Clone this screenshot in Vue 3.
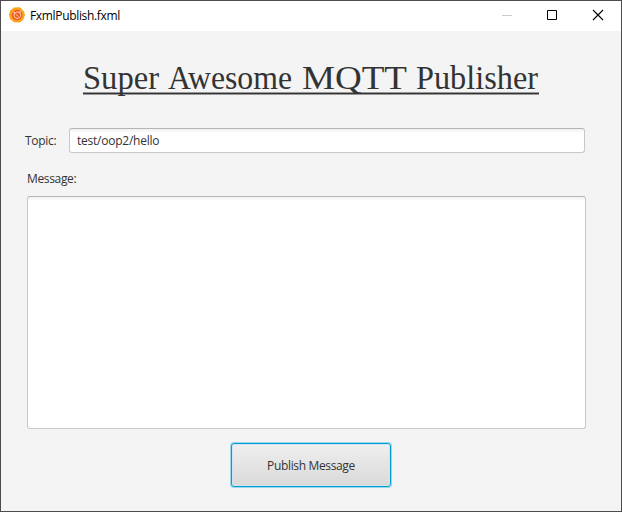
<script setup>
import { ref } from 'vue'

const topic = ref('test/oop2/hello')
const message = ref('')
const heading = [
  { text: 'Super', x: 0, width: 76 },
  { text: 'Awesome', x: 85, width: 124 },
  { text: 'MQTT', x: 219, width: 105 },
  { text: 'Publisher', x: 333, width: 122 },
]
</script>

<template>
  <main class="window">
    <header class="titlebar">
      <svg class="logo" width="16" height="16" viewBox="0 0 16 16">
        <path d="M5 .5 11 .3 15 4.500 16 8 14.200 13 10.500 15.600 5 15.300 1 12 0 8 1.200 3.400Z" fill="#f9a51c" />
        <circle cx="8" cy="8" r="5.300" fill="#f4581f" />
        <path d="M3.800 4.800 6.300 5.800C8 4.600 10 5 11 6.200c.9 1.300.7 3.300-.4 4.300-1.300 1.200-3.600 1.100-4.800-.1-1-1.100-1.100-3-.1-4.200M10 5.400l2-.7" fill="none" stroke="#ffe0c4" stroke-width="1" />
        <path d="m6.500 7 3 2.500" stroke="#ffd9b8" stroke-width=".9" />
      </svg>
      <span class="caption">FxmlPublish.fxml</span>
      <div class="controls">
        <svg width="46" height="29" viewBox="0 0 46 29"><path d="M18 14.500h10" stroke="#ccc" /></svg>
        <svg width="46" height="29" viewBox="0 0 46 29"><path d="M17.500 9.500h9v9h-9z" fill="none" stroke="#000" /></svg>
        <svg width="46" height="29" viewBox="0 0 46 29"><path d="m17 9 10 10M27 9 17 19" stroke="#000" stroke-width="1.100" /></svg>
      </div>
    </header>

    <h1 class="heading">
      <svg width="456" height="46" viewBox="0 0 456 46">
        <path d="M0 38.500h456" stroke="#999" stroke-width="3" />
        <path d="M0 38.500h456" stroke="#333" stroke-width="1" />
        <text
          v-for="word in heading"
          :key="word.text"
          :x="word.x"
          y="34"
          :textLength="word.width"
          lengthAdjust="spacingAndGlyphs"
        >{{ word.text }}</text>
      </svg>
    </h1>

    <div class="topic">
      <label for="topic">Topic:</label>
      <input id="topic" v-model="topic" class="field" type="text" />
    </div>
    <label class="message-label" for="message">Message:</label>
    <textarea id="message" v-model="message" class="field area"></textarea>
    <button class="publish"><span>Publish Message</span></button>
  </main>
</template>

<style>
body { margin: 0; }
</style>

<style scoped>
.window {
  box-sizing: border-box;
  width: 622px;
  height: 512px;
  display: flex;
  flex-direction: column;
  overflow: hidden;
  border: 1px solid #4d4b50;
  background: #f4f4f4;
  color: #333;
  font: 12px/16px "Open Sans", "Noto Sans", sans-serif;
}
.titlebar {
  height: 30px;
  flex: none;
  display: flex;
  align-items: flex-start;
  background: #fff;
  color: #000;
}
.logo { margin: 6px 0 0 8px; }
.caption { margin: 7px 0 0 5px; letter-spacing: -0.33px; }
.controls { display: flex; margin-left: auto; margin-right: -1px; }
.heading { margin: 24px 0 0 82px; height: 44px; font-weight: 400; }
.heading svg { display: block; overflow: visible; }
.heading text { font: 34px "Liberation Serif", serif; fill: #333; }
.topic {
  display: flex;
  align-items: center;
  height: 25px;
  margin: 29px 0 0 24px;
}
.topic label { width: 44px; padding-top: 1px; letter-spacing: -0.3px; }
.field {
  box-sizing: border-box;
  margin: 0;
  border: 1px solid #c8c8c8;
  border-top-color: #b5b5b5;
  border-radius: 3px;
  outline: none;
  background: linear-gradient(#f0f0f0, #fff 4px);
  color: #333;
  font: inherit;
}
.topic .field {
  width: 516px;
  height: 25px;
  padding: 0 7px;
  letter-spacing: -0.24px;
}
.message-label { margin: 18px 0 0 26px; letter-spacing: -0.35px; }
.area {
  display: block;
  flex: none;
  width: 559px;
  height: 233px;
  margin: 9px 0 0 26px;
  padding: 4px 8px;
  resize: none;
}
.publish {
  box-sizing: border-box;
  flex: none;
  width: 160px;
  height: 44px;
  margin: 14px 0 0 230px;
  padding: 2px 0 0;
  border: 1px solid #039ed3;
  border-radius: 3px;
  background: linear-gradient(#efefef, #d9d9d9);
  box-shadow: 0 0 0 1px #9bd6ec, inset 0 0 0 1px #d0e5ed;
  color: #333;
  font: inherit;
  letter-spacing: -0.35px;
}
</style>
